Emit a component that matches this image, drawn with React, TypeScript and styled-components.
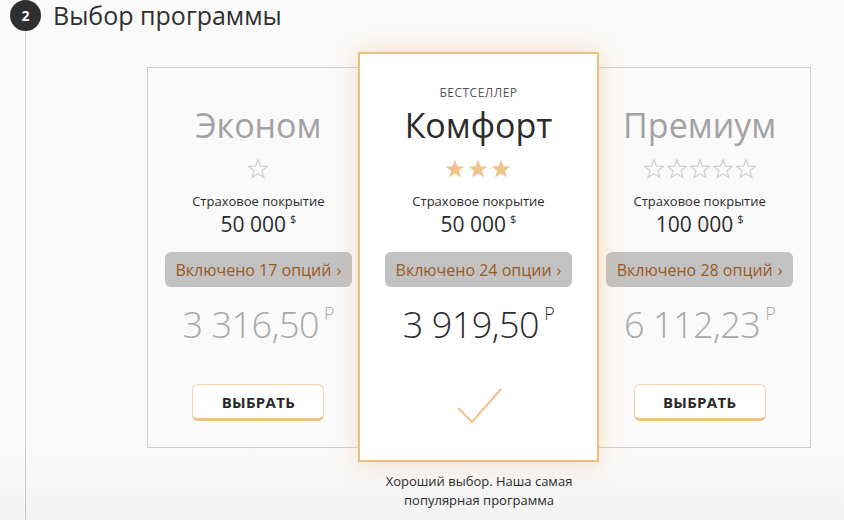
import React from "react";
import styled, { createGlobalStyle } from "styled-components";

const Global = createGlobalStyle`
  html, body { margin: 0; padding: 0; }
  body {
    font-family: "Open Sans", "Noto Sans", sans-serif;
    background: linear-gradient(#fafafa 0%, #fafafa 86%, #f2f2f2 100%);
    min-height: 520px;
    color: #2b2b2b;
  }
`;

const Page = styled.div`
  width: 844px;
  height: 520px;
  overflow: hidden;
`;

const Header = styled.div`
  display: flex;
  align-items: center;
  gap: 12px;
  padding-left: 10px;
  height: 31px;
`;

const StepBadge = styled.div`
  width: 31px;
  height: 31px;
  border-radius: 50%;
  background: #2f2f2f;
  color: #fff;
  font-weight: 700;
  font-size: 14px;
  display: flex;
  align-items: center;
  justify-content: center;
`;

const Title = styled.h1`
  margin: 0;
  font-size: 25px;
  font-weight: 400;
  line-height: 31px;
  color: #2f2f2f;
  white-space: nowrap;
`;

const Rail = styled.div`
  margin-left: 25px;
  border-left: 1px solid #cccccc;
  padding: 36px 0 0 121px;
  height: calc(520px - 31px);
  box-sizing: border-box;
`;

const Box = styled.div`
  width: 664px;
  box-sizing: border-box;
  border: 1px solid #cfcfcf;
  background: #fafafa;
  display: grid;
  grid-template-columns: 1fr 1fr 1fr;
  align-items: stretch;
`;

const Column = styled.div<{ $active?: boolean }>`
  display: flex;
  flex-direction: column;
  align-items: center;
  padding-top: ${(p) => (p.$active ? 30 : 16)}px;
  padding-bottom: 26px;
  ${(p) =>
    p.$active &&
    `
    background: #ffffff;
    border: 2px solid #ebbd80;
    margin: -16px -10px -15px -11px;
    box-shadow: 0 0 22px rgba(238, 180, 110, 0.45);
    position: relative;
    z-index: 1;
  `}
`;

const Label = styled.div`
  height: 18px;
  font-size: 12px;
  line-height: 18px;
  color: #555;
  text-transform: uppercase;
  letter-spacing: 0.5px;
`;

const Name = styled.div<{ $active?: boolean }>`
  font-size: 34px;
  line-height: 46px;
  color: ${(p) => (p.$active ? "#2b2b2b" : "#a2a2a2")};
`;

const Stars = styled.div`
  display: flex;
  gap: 3px;
  height: 20px;
  margin-top: 11px;
`;

const Coverage = styled.div`
  margin-top: 13px;
  font-size: 13px;
  line-height: 18px;
  color: #2b2b2b;
`;

const Amount = styled.div`
  margin-top: 2px;
  font-size: 21px;
  line-height: 24px;
  color: #2b2b2b;
`;

const Sup = styled.sup<{ $size: number; $gap: number }>`
  font-size: ${(p) => p.$size}px;
  vertical-align: top;
  position: relative;
  top: 1px;
  margin-left: ${(p) => p.$gap}px;
  line-height: 1;
`;

const Pill = styled.div`
  margin-top: 16px;
  width: 187px;
  height: 35px;
  border-radius: 6px;
  background: #c2c2c2;
  color: #9a5a22;
  font-size: 16px;
  display: flex;
  align-items: center;
  justify-content: center;
  gap: 5px;
`;

const Price = styled.div<{ $active?: boolean }>`
  margin-top: 16px;
  font-size: 36px;
  font-weight: 300;
  line-height: 44px;
  color: ${(p) => (p.$active ? "#2b2b2b" : "#a8a8a8")};
  letter-spacing: -0.5px;
`;

const Button = styled.button`
  margin-top: 37px;
  width: 132px;
  height: 37px;
  box-sizing: border-box;
  background: #fff;
  border: 1px solid #f2d2a6;
  border-bottom: 3px solid #efc183;
  border-radius: 6px;
  font-family: "Open Sans", sans-serif;
  font-weight: 700;
  font-size: 15px;
  color: #2a2a2a;
  letter-spacing: 0.3px;
  padding: 0;
  cursor: pointer;
`;

const CheckWrap = styled.div`
  margin-top: 40px;
  height: 38px;
  display: flex;
  justify-content: center;
  padding-left: 4px;
`;

const CaptionRow = styled.div`
  width: 664px;
  display: grid;
  grid-template-columns: 1fr 1fr 1fr;
  margin-top: 24px;
`;

const Caption = styled.div`
  grid-column: 2;
  margin: 0 -20px;
  text-align: center;
  font-size: 13px;
  line-height: 19px;
  color: #2b2b2b;
`;

const STAR =
  "10,0.8 12.45,7.2 19.4,7.4 13.95,11.8 15.9,18.6 10,14.6 4.1,18.6 6.05,11.8 0.6,7.4 7.55,7.2";

const Star: React.FC<{ filled?: boolean }> = ({ filled }) => (
  <svg width="20" height="20" viewBox="0 0 20 20">
    {filled ? (
      <polygon points={STAR} fill="#efc48a" />
    ) : (
      <polygon
        points={STAR}
        fill="none"
        stroke="#cdcdcd"
        strokeWidth="1.2"
        strokeLinejoin="miter"
      />
    )}
  </svg>
);

type Plan = {
  name: string;
  stars: number;
  filled: boolean;
  coverage: string;
  options: string;
  price: string;
  active?: boolean;
};

const plans: Plan[] = [
  { name: "Эконом", stars: 1, filled: false, coverage: "50 000", options: "Включено 17 опций", price: "3 316,50" },
  { name: "Комфорт", stars: 3, filled: true, coverage: "50 000", options: "Включено 24 опции", price: "3 919,50", active: true },
  { name: "Премиум", stars: 5, filled: false, coverage: "100 000", options: "Включено 28 опций", price: "6 112,23" },
];

export default function App() {
  return (
    <Page>
      <Global />
      <Header>
        <StepBadge>2</StepBadge>
        <Title>Выбор программы</Title>
      </Header>
      <Rail>
        <Box>
          {plans.map((p) => (
            <Column key={p.name} $active={p.active}>
              <Label>{p.active ? "Бестселлер" : ""}</Label>
              <Name $active={p.active}>{p.name}</Name>
              <Stars>
                {Array.from({ length: p.stars }).map((_, i) => (
                  <Star key={i} filled={p.filled} />
                ))}
              </Stars>
              <Coverage>Страховое покрытие</Coverage>
              <Amount>
                {p.coverage}
                <Sup $size={11} $gap={4}>$</Sup>
              </Amount>
              <Pill>
                {p.options} <span>›</span>
              </Pill>
              <Price $active={p.active}>
                {p.price}
                <Sup $size={18} $gap={5}>Р</Sup>
              </Price>
              {p.active ? (
                <CheckWrap>
                  <svg width="46" height="38" viewBox="0 0 46 38">
                    <polyline
                      points="1,21 15,35 44,2"
                      fill="none"
                      stroke="#efc28a"
                      strokeWidth="2"
                    />
                  </svg>
                </CheckWrap>
              ) : (
                <Button>ВЫБРАТЬ</Button>
              )}
            </Column>
          ))}
        </Box>
        <CaptionRow>
          <Caption>
            Хороший выбор. Наша самая
            <br />
            популярная программа
          </Caption>
        </CaptionRow>
      </Rail>
    </Page>
  );
}
